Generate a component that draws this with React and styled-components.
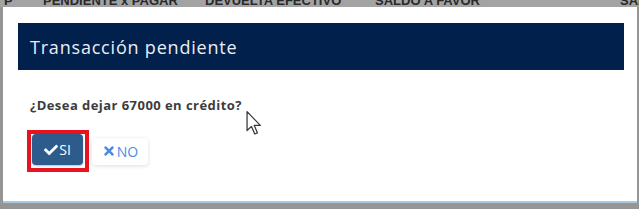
import React from "react";
import styled, { createGlobalStyle } from "styled-components";
import { FaCheck, FaTimes } from "react-icons/fa";

const Global = createGlobalStyle`
  html, body { margin: 0; padding: 0; }
  body {
    width: 639px;
    height: 209px;
    overflow: hidden;
    background: #959595;
    font-family: "Open Sans", Lato, sans-serif;
  }
`;

const Page = styled.div`
  width: 639px;
  height: 209px;
  position: relative;
  overflow: hidden;
`;

const BackdropHeader = styled.div`
  height: 7px;
  overflow: hidden;
  display: flex;
  align-items: flex-end;
  background: #a3a3a3;
`;

const HeaderCell = styled.span`
  flex: none;
  box-sizing: border-box;
  width: ${(p) => p.$w}px;
  padding-left: ${(p) => p.$pl || 0}px;
  font-family: "Liberation Sans", Arial, sans-serif;
  font-weight: 700;
  font-size: 13px;
  line-height: 12px;
  color: #2a2a2a;
  white-space: nowrap;
  overflow: hidden;
`;

const Modal = styled.div`
  box-sizing: border-box;
  margin-left: 3px;
  width: 634px;
  height: 196px;
  background: #ffffff;
  border-bottom: 2px solid #a8c9e4;
  padding: 16px 13px 0 15px;
  display: flex;
  flex-direction: column;
`;

const ModalHeader = styled.div`
  height: 47px;
  background: #02204c;
  display: flex;
  align-items: center;
  padding-left: 12px;
`;

const Title = styled.h4`
  margin: 0;
  font-weight: 400;
  font-size: 18px;
  color: #e9eef6;
  letter-spacing: 0.8px;
`;

const ModalBody = styled.div`
  padding: 0 12px;
`;

const Question = styled.p`
  margin: 27px 0 0;
  font-weight: 700;
  font-size: 13px;
  line-height: 16px;
  color: #3c3c3c;
  letter-spacing: 0.45px;
`;

const Actions = styled.div`
  margin-top: 17px;
  display: flex;
  align-items: center;
  gap: 3px;
  margin-left: -3px;
`;

const Highlight = styled.div`
  border: 4px solid #e8131f;
  padding: 0 2px 3px 1px;
  display: flex;
`;

const Button = styled.button`
  box-sizing: border-box;
  display: flex;
  align-items: center;
  justify-content: center;
  gap: 1px;
  height: ${(p) => (p.$primary ? 31 : 27)}px;
  width: ${(p) => (p.$primary ? 51 : 56)}px;
  border: none;
  border-radius: 4px;
  padding: 0;
  font-family: "Open Sans", Lato, sans-serif;
  font-size: 14px;
  background: ${(p) => (p.$primary ? "#2c5b8c" : "#ffffff")};
  color: ${(p) => (p.$primary ? "#ffffff" : "#4a8be6")};
  box-shadow: ${(p) =>
    p.$primary ? "0 1px 2px rgba(0,0,0,0.25)" : "0 1px 4px rgba(0,0,0,0.14)"};
  svg {
    width: 14px;
    height: 14px;
  }
`;

const Cursor = styled.svg`
  position: absolute;
  left: 246px;
  top: 111px;
  width: 16px;
  height: 24px;
`;

export default function App() {
  return (
    <Page>
      <Global />
      <BackdropHeader>
        <HeaderCell $w={43} $pl={4}>P</HeaderCell>
        <HeaderCell $w={162}>PENDIENTE x PAGAR</HeaderCell>
        <HeaderCell $w={170}>DEVUELTA EFECTIVO</HeaderCell>
        <HeaderCell $w={245}>SALDO A FAVOR</HeaderCell>
        <HeaderCell $w={19}>SALDO</HeaderCell>
      </BackdropHeader>
      <Modal>
        <ModalHeader>
          <Title>Transacción pendiente</Title>
        </ModalHeader>
        <ModalBody>
          <Question>¿Desea dejar 67000 en crédito?</Question>
          <Actions>
            <Highlight>
              <Button $primary>
                <FaCheck />
                SI
              </Button>
            </Highlight>
            <Button>
              <FaTimes />
              NO
            </Button>
          </Actions>
        </ModalBody>
      </Modal>
      <Cursor viewBox="0 0 12 19">
        <path
          d="M0.5 0.5 L0.5 15.5 L4 12.2 L6.6 18.2 L8.7 17.3 L6.2 11.4 L11 11.4 Z"
          fill="#ffffff"
          stroke="#3a3a3a"
          strokeWidth="1"
          strokeLinejoin="round"
        />
      </Cursor>
    </Page>
  );
}
